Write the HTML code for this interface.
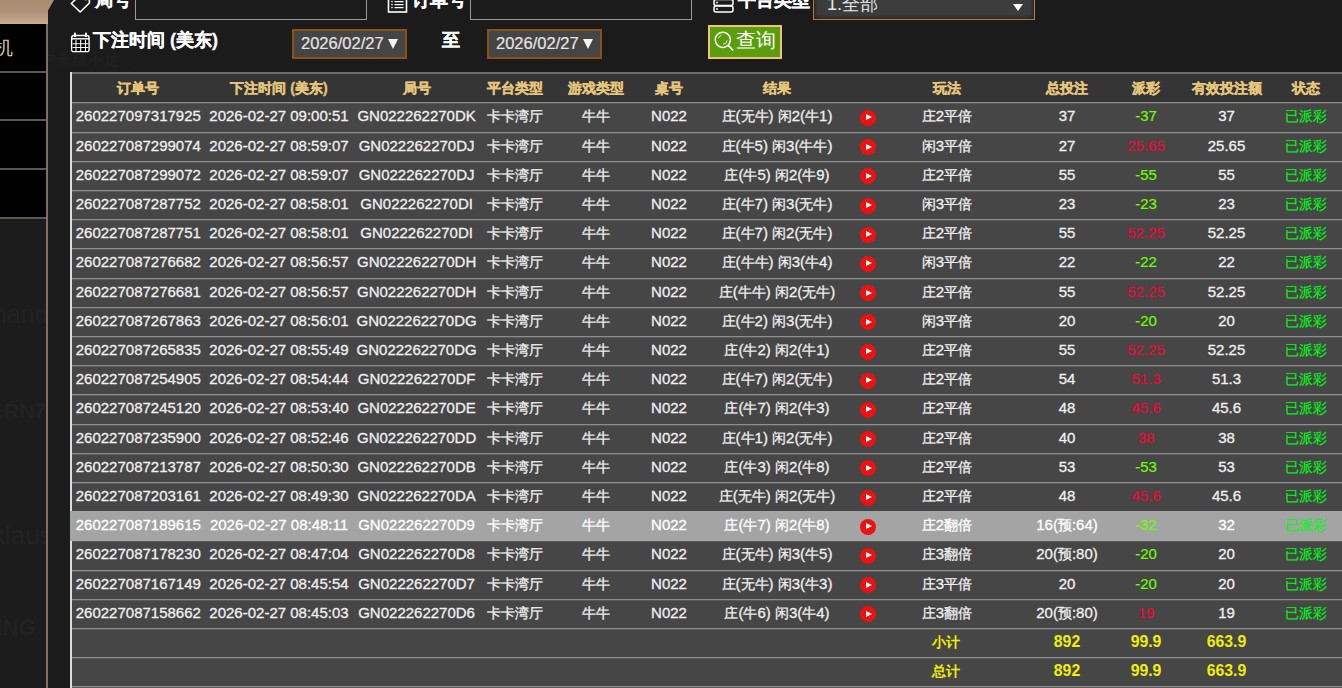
<!DOCTYPE html>
<html><head><meta charset="utf-8">
<style>
*{margin:0;padding:0;box-sizing:border-box}
html,body{width:1342px;height:688px;overflow:hidden;background:#1b1b1b;font-family:"Liberation Sans",sans-serif;color:#fff}
body{position:relative}
.a{position:absolute}
/* sidebar */
#sb{left:0;top:0;width:46px;height:688px;background:#1c1c1c}
#tan{left:0;top:0;width:60px;height:24px;background:linear-gradient(#a98b6e 0%,#b0937a 50%,#c8ad8e 100%)}
.item{left:0;width:46px;background:#000}
.sep{left:0;width:46px;height:2px;background:#5c5751}
#sbb{left:46px;top:24px;width:2px;height:664px;background:#7d6f62}
#main{left:48px;top:0;width:1294px;height:688px;background:#1b1b1b;clip-path:polygon(6px 0,100% 0,100% 100%,0 100%,0 10.5px)}
.lbl{font-size:18px;font-weight:bold;color:#fff;white-space:nowrap;line-height:20px;-webkit-text-stroke:0.3px #fff}
.inp{border:1.5px solid #9a9a9a;background:transparent}
.date{border:2px solid #8b4f1a;background:#454545;color:#e6e6e6;font-size:16.5px;line-height:24px;padding-left:7px;white-space:nowrap;-webkit-text-stroke:0.2px #e6e6e6}
.date i{position:absolute;left:93.5px;top:8px;width:0;height:0;border-left:5.5px solid transparent;border-right:5.5px solid transparent;border-top:10px solid #f4f4f4}
#btn{left:708px;top:25px;width:74px;height:34px;border:2px solid #f2c274;background:#5a9e0e}
/* table */
#tbl{left:70px;top:72px;width:1272px;height:616px;overflow:hidden}
.hrow{position:absolute;left:0;top:0;width:1272px;height:30px;background:#353535;border-top:2px solid #6e6e6e}
.row{position:absolute;left:0;width:1272px;height:29.17px;background:#464646}
.row::before{content:"";position:absolute;left:0;top:0;width:100%;height:1px;background:#8e8e8e;box-shadow:0 1px 0 #5a5a5a}
.row.hl{background:#a4a4a4;z-index:2;height:29.8px}
.row.hl::before{display:none}
.hl .c:not(.pg):not(.st){color:#fff}
.c{position:absolute;top:0;width:200px;text-align:center;white-space:nowrap;font-size:15px;line-height:27px;color:#f0f0f0;-webkit-text-stroke:0.3px currentColor}
.hrow .c{color:#e6c57c;font-weight:bold;font-size:14.2px;line-height:28px}
.z{font-weight:inherit;font-size:14.1px}
.hrow .z{font-size:14.2px}
.pg{color:#70ff00;-webkit-text-stroke:0.15px currentColor}
.pr{color:#ff0034;-webkit-text-stroke:0}
.st{color:#00f814;-webkit-text-stroke:0.15px currentColor}
.sum{color:#f0f000;font-weight:bold;-webkit-text-stroke:0;font-size:15.8px}
.sum .z{font-size:14.2px}
.play{position:absolute;top:7.5px;width:16px;height:16px;border-radius:50%;background:#ee1111}
.play::after{content:"";position:absolute;left:6px;top:4.5px;border-left:6px solid #fff;border-top:3.5px solid transparent;border-bottom:3.5px solid transparent}
#lb{left:70px;top:72px;width:2px;height:616px;background:#dcdcdc}
</style></head><body>
<div id="sb" class="a"></div>
<div id="tan" class="a"></div>
<div class="a item" style="top:24px;height:48px"></div>
<div class="a sep" style="top:71px"></div>
<div class="a item" style="top:73px;height:47px"></div>
<div class="a sep" style="top:119px"></div>
<div class="a item" style="top:121px;height:48px"></div>
<div class="a sep" style="top:168px"></div>
<div class="a item" style="top:170px;height:48px"></div>
<div class="a sep" style="top:217px"></div>
<div class="a" style="left:0;top:218px;width:46px;height:470px;overflow:hidden">
<div class="a" style="left:-14px;top:81px;font-size:25px;line-height:30px;color:#222;white-space:nowrap">manda</div>
<div class="a" style="left:-10px;top:180px;font-size:21px;font-weight:bold;line-height:26px;color:#222;white-space:nowrap">ERN73</div>
<div class="a" style="left:-8px;top:302px;font-size:26px;line-height:30px;color:#222;white-space:nowrap">klaus</div>
<div class="a" style="left:-12px;top:397px;font-size:22px;font-weight:bold;line-height:26px;color:#222;white-space:nowrap">ENG</div>
</div>
<div class="a" style="left:-6px;top:36.5px;font-size:19px;color:#d8c8b0;line-height:21px">机</div>
<div id="sbb" class="a"></div>
<div id="main" class="a"><div class="a" style="left:-8px;top:50px;font-size:16px;line-height:20px;color:#212121;white-space:nowrap">户余额不足，</div></div>

<!-- filter row 1 -->
<svg class="a" style="left:70px;top:-8px" width="22" height="24" viewBox="0 0 22 24"><path d="M9.5 3.5 L1.3 11.5 L10.2 20 L19.4 11 L19.4 1" fill="none" stroke="#fff" stroke-width="1.6" stroke-linejoin="round"/><circle cx="15.8" cy="8.3" r="1" fill="#666"/></svg>
<div class="a lbl" style="left:95px;top:-10px">局号</div>
<div class="a inp" style="left:135px;top:-10px;width:232px;height:30px"></div>
<svg class="a" style="left:387px;top:-8px" width="21" height="21" viewBox="0 0 21 21"><rect x="1.5" y="0" width="18" height="20" fill="none" stroke="#fff" stroke-width="1.6"/><path d="M7.5 9.6h9M7.5 12.6h9M7.5 15.6h9" stroke="#fff" stroke-width="1.2"/><circle cx="5" cy="9.6" r="0.8" fill="#fff"/><circle cx="5" cy="12.6" r="0.8" fill="#fff"/><circle cx="5" cy="15.6" r="0.8" fill="#fff"/></svg>
<div class="a lbl" style="left:412px;top:-10px">订单号</div>
<div class="a inp" style="left:470px;top:-10px;width:222px;height:30px"></div>
<svg class="a" style="left:712px;top:-8px" width="22" height="21" viewBox="0 0 22 21"><rect x="2" y="7.5" width="19" height="6" rx="2" fill="none" stroke="#fff" stroke-width="1.5"/><rect x="2" y="14" width="19" height="6" rx="2" fill="none" stroke="#fff" stroke-width="1.5"/><circle cx="5" cy="10.5" r="0.9" fill="#fff"/><circle cx="5" cy="17" r="0.9" fill="#fff"/></svg>
<div class="a lbl" style="left:738px;top:-10px">平台类型</div>
<div class="a" style="left:813px;top:-12px;width:222px;height:32px;border:1px solid #b87838;background:#3c3c3c;box-shadow:inset 0 0 4px #111"></div>
<div class="a" style="left:827px;top:-6.5px;font-size:18px;line-height:20px;color:#e8e8e8">1.全部</div>
<div class="a" style="left:1013px;top:4px;width:0;height:0;border-left:5.5px solid transparent;border-right:5.5px solid transparent;border-top:7px solid #fff"></div>

<!-- filter row 2 -->
<svg class="a" style="left:70px;top:32px" width="21" height="21" viewBox="0 0 21 21"><rect x="1.7" y="3.5" width="17.3" height="16.1" rx="2.2" fill="none" stroke="#fff" stroke-width="1.5"/><rect x="2.6" y="8" width="15.6" height="11" fill="#000"/><path d="M1.7 6.8h17.3" stroke="#fff" stroke-width="1.4"/><path d="M5 1.6v2.6M16 1.6v2.6" stroke="#fff" stroke-width="2" stroke-linecap="round"/><path d="M6 8v11M10.7 8v11M15.5 8v11M2.5 11.7h15.8M2.5 15.5h15.8" stroke="#fff" stroke-width="1.1"/></svg>
<div class="a lbl" style="left:93px;top:30px">下注时间 (美东)</div>
<div class="a date" style="left:292px;top:29px;width:115px;height:30px">2026/02/27<i></i></div>
<div class="a lbl" style="left:442px;top:30px">至</div>
<div class="a date" style="left:487px;top:29px;width:115px;height:30px">2026/02/27<i></i></div>
<div id="btn" class="a"></div>
<svg class="a" style="left:714px;top:31px" width="21" height="21" viewBox="0 0 21 21"><circle cx="8.8" cy="8.8" r="7.6" fill="none" stroke="#fff" stroke-width="1.5"/><path d="M14.2 14.4L18.6 18.8" stroke="#fff" stroke-width="1.7" stroke-linecap="round"/><path d="M4.6 7.2a4.8 4.8 0 0 1 2.8-3" fill="none" stroke="#fff" stroke-width="0.9" opacity="0.85"/><path d="M13.2 9.2a4.8 4.8 0 0 1 -4.2 4.2" fill="none" stroke="#fff" stroke-width="0.9" opacity="0.85"/></svg>
<div class="a" style="left:736px;top:28px;font-size:20px;line-height:24px;color:#fff">查询</div>

<div id="tbl" class="a">
<div class="hrow"><span class="c " style="left:-31.7px"><b class="z">订单号</b></span><span class="c " style="left:109.0px"><b class="z">下注时间</b> (<b class="z">美东</b>)</span><span class="c " style="left:246.6px"><b class="z">局号</b></span><span class="c " style="left:344.5px"><b class="z">平台类型</b></span><span class="c " style="left:426.0px"><b class="z">游戏类型</b></span><span class="c " style="left:499.0px"><b class="z">桌号</b></span><span class="c " style="left:607.0px"><b class="z">结果</b></span><span class="c " style="left:777.0px"><b class="z">玩法</b></span><span class="c " style="left:897.0px"><b class="z">总投注</b></span><span class="c " style="left:976.0px"><b class="z">派彩</b></span><span class="c " style="left:1056.5px"><b class="z">有效投注额</b></span><span class="c " style="left:1136.0px"><b class="z">状态</b></span></div>
<div class="row" style="top:30.40px"><span class="c " style="left:-31.7px">260227097317925</span><span class="c " style="left:109.0px">2026-02-27 09:00:51</span><span class="c " style="left:246.6px">GN022262270DK</span><span class="c " style="left:344.5px"><b class="z">卡卡湾厅</b></span><span class="c " style="left:426.0px"><b class="z">牛牛</b></span><span class="c " style="left:499.0px">N022</span><span class="c " style="left:607.0px"><b class="z">庄</b>(<b class="z">无牛</b>) <b class="z">闲</b>2(<b class="z">牛</b>1)</span><span class="play" style="left:790.0px"></span><span class="c " style="left:777.0px"><b class="z">庄</b>2<b class="z">平倍</b></span><span class="c " style="left:897.0px">37</span><span class="c pg" style="left:976.0px">-37</span><span class="c " style="left:1056.5px">37</span><span class="c st" style="left:1136.0px"><b class="z">已派彩</b></span></div>
<div class="row" style="top:59.60px"><span class="c " style="left:-31.7px">260227087299074</span><span class="c " style="left:109.0px">2026-02-27 08:59:07</span><span class="c " style="left:246.6px">GN022262270DJ</span><span class="c " style="left:344.5px"><b class="z">卡卡湾厅</b></span><span class="c " style="left:426.0px"><b class="z">牛牛</b></span><span class="c " style="left:499.0px">N022</span><span class="c " style="left:607.0px"><b class="z">庄</b>(<b class="z">牛</b>5) <b class="z">闲</b>3(<b class="z">牛牛</b>)</span><span class="play" style="left:790.0px"></span><span class="c " style="left:777.0px"><b class="z">闲</b>3<b class="z">平倍</b></span><span class="c " style="left:897.0px">27</span><span class="c pr" style="left:976.0px">25.65</span><span class="c " style="left:1056.5px">25.65</span><span class="c st" style="left:1136.0px"><b class="z">已派彩</b></span></div>
<div class="row" style="top:88.80px"><span class="c " style="left:-31.7px">260227087299072</span><span class="c " style="left:109.0px">2026-02-27 08:59:07</span><span class="c " style="left:246.6px">GN022262270DJ</span><span class="c " style="left:344.5px"><b class="z">卡卡湾厅</b></span><span class="c " style="left:426.0px"><b class="z">牛牛</b></span><span class="c " style="left:499.0px">N022</span><span class="c " style="left:607.0px"><b class="z">庄</b>(<b class="z">牛</b>5) <b class="z">闲</b>2(<b class="z">牛</b>9)</span><span class="play" style="left:790.0px"></span><span class="c " style="left:777.0px"><b class="z">庄</b>2<b class="z">平倍</b></span><span class="c " style="left:897.0px">55</span><span class="c pg" style="left:976.0px">-55</span><span class="c " style="left:1056.5px">55</span><span class="c st" style="left:1136.0px"><b class="z">已派彩</b></span></div>
<div class="row" style="top:118.00px"><span class="c " style="left:-31.7px">260227087287752</span><span class="c " style="left:109.0px">2026-02-27 08:58:01</span><span class="c " style="left:246.6px">GN022262270DI</span><span class="c " style="left:344.5px"><b class="z">卡卡湾厅</b></span><span class="c " style="left:426.0px"><b class="z">牛牛</b></span><span class="c " style="left:499.0px">N022</span><span class="c " style="left:607.0px"><b class="z">庄</b>(<b class="z">牛</b>7) <b class="z">闲</b>3(<b class="z">无牛</b>)</span><span class="play" style="left:790.0px"></span><span class="c " style="left:777.0px"><b class="z">闲</b>3<b class="z">平倍</b></span><span class="c " style="left:897.0px">23</span><span class="c pg" style="left:976.0px">-23</span><span class="c " style="left:1056.5px">23</span><span class="c st" style="left:1136.0px"><b class="z">已派彩</b></span></div>
<div class="row" style="top:147.20px"><span class="c " style="left:-31.7px">260227087287751</span><span class="c " style="left:109.0px">2026-02-27 08:58:01</span><span class="c " style="left:246.6px">GN022262270DI</span><span class="c " style="left:344.5px"><b class="z">卡卡湾厅</b></span><span class="c " style="left:426.0px"><b class="z">牛牛</b></span><span class="c " style="left:499.0px">N022</span><span class="c " style="left:607.0px"><b class="z">庄</b>(<b class="z">牛</b>7) <b class="z">闲</b>2(<b class="z">无牛</b>)</span><span class="play" style="left:790.0px"></span><span class="c " style="left:777.0px"><b class="z">庄</b>2<b class="z">平倍</b></span><span class="c " style="left:897.0px">55</span><span class="c pr" style="left:976.0px">52.25</span><span class="c " style="left:1056.5px">52.25</span><span class="c st" style="left:1136.0px"><b class="z">已派彩</b></span></div>
<div class="row" style="top:176.40px"><span class="c " style="left:-31.7px">260227087276682</span><span class="c " style="left:109.0px">2026-02-27 08:56:57</span><span class="c " style="left:246.6px">GN022262270DH</span><span class="c " style="left:344.5px"><b class="z">卡卡湾厅</b></span><span class="c " style="left:426.0px"><b class="z">牛牛</b></span><span class="c " style="left:499.0px">N022</span><span class="c " style="left:607.0px"><b class="z">庄</b>(<b class="z">牛牛</b>) <b class="z">闲</b>3(<b class="z">牛</b>4)</span><span class="play" style="left:790.0px"></span><span class="c " style="left:777.0px"><b class="z">闲</b>3<b class="z">平倍</b></span><span class="c " style="left:897.0px">22</span><span class="c pg" style="left:976.0px">-22</span><span class="c " style="left:1056.5px">22</span><span class="c st" style="left:1136.0px"><b class="z">已派彩</b></span></div>
<div class="row" style="top:205.60px"><span class="c " style="left:-31.7px">260227087276681</span><span class="c " style="left:109.0px">2026-02-27 08:56:57</span><span class="c " style="left:246.6px">GN022262270DH</span><span class="c " style="left:344.5px"><b class="z">卡卡湾厅</b></span><span class="c " style="left:426.0px"><b class="z">牛牛</b></span><span class="c " style="left:499.0px">N022</span><span class="c " style="left:607.0px"><b class="z">庄</b>(<b class="z">牛牛</b>) <b class="z">闲</b>2(<b class="z">无牛</b>)</span><span class="play" style="left:790.0px"></span><span class="c " style="left:777.0px"><b class="z">庄</b>2<b class="z">平倍</b></span><span class="c " style="left:897.0px">55</span><span class="c pr" style="left:976.0px">52.25</span><span class="c " style="left:1056.5px">52.25</span><span class="c st" style="left:1136.0px"><b class="z">已派彩</b></span></div>
<div class="row" style="top:234.80px"><span class="c " style="left:-31.7px">260227087267863</span><span class="c " style="left:109.0px">2026-02-27 08:56:01</span><span class="c " style="left:246.6px">GN022262270DG</span><span class="c " style="left:344.5px"><b class="z">卡卡湾厅</b></span><span class="c " style="left:426.0px"><b class="z">牛牛</b></span><span class="c " style="left:499.0px">N022</span><span class="c " style="left:607.0px"><b class="z">庄</b>(<b class="z">牛</b>2) <b class="z">闲</b>3(<b class="z">无牛</b>)</span><span class="play" style="left:790.0px"></span><span class="c " style="left:777.0px"><b class="z">闲</b>3<b class="z">平倍</b></span><span class="c " style="left:897.0px">20</span><span class="c pg" style="left:976.0px">-20</span><span class="c " style="left:1056.5px">20</span><span class="c st" style="left:1136.0px"><b class="z">已派彩</b></span></div>
<div class="row" style="top:264.00px"><span class="c " style="left:-31.7px">260227087265835</span><span class="c " style="left:109.0px">2026-02-27 08:55:49</span><span class="c " style="left:246.6px">GN022262270DG</span><span class="c " style="left:344.5px"><b class="z">卡卡湾厅</b></span><span class="c " style="left:426.0px"><b class="z">牛牛</b></span><span class="c " style="left:499.0px">N022</span><span class="c " style="left:607.0px"><b class="z">庄</b>(<b class="z">牛</b>2) <b class="z">闲</b>2(<b class="z">牛</b>1)</span><span class="play" style="left:790.0px"></span><span class="c " style="left:777.0px"><b class="z">庄</b>2<b class="z">平倍</b></span><span class="c " style="left:897.0px">55</span><span class="c pr" style="left:976.0px">52.25</span><span class="c " style="left:1056.5px">52.25</span><span class="c st" style="left:1136.0px"><b class="z">已派彩</b></span></div>
<div class="row" style="top:293.20px"><span class="c " style="left:-31.7px">260227087254905</span><span class="c " style="left:109.0px">2026-02-27 08:54:44</span><span class="c " style="left:246.6px">GN022262270DF</span><span class="c " style="left:344.5px"><b class="z">卡卡湾厅</b></span><span class="c " style="left:426.0px"><b class="z">牛牛</b></span><span class="c " style="left:499.0px">N022</span><span class="c " style="left:607.0px"><b class="z">庄</b>(<b class="z">牛</b>7) <b class="z">闲</b>2(<b class="z">无牛</b>)</span><span class="play" style="left:790.0px"></span><span class="c " style="left:777.0px"><b class="z">庄</b>2<b class="z">平倍</b></span><span class="c " style="left:897.0px">54</span><span class="c pr" style="left:976.0px">51.3</span><span class="c " style="left:1056.5px">51.3</span><span class="c st" style="left:1136.0px"><b class="z">已派彩</b></span></div>
<div class="row" style="top:322.40px"><span class="c " style="left:-31.7px">260227087245120</span><span class="c " style="left:109.0px">2026-02-27 08:53:40</span><span class="c " style="left:246.6px">GN022262270DE</span><span class="c " style="left:344.5px"><b class="z">卡卡湾厅</b></span><span class="c " style="left:426.0px"><b class="z">牛牛</b></span><span class="c " style="left:499.0px">N022</span><span class="c " style="left:607.0px"><b class="z">庄</b>(<b class="z">牛</b>7) <b class="z">闲</b>2(<b class="z">牛</b>3)</span><span class="play" style="left:790.0px"></span><span class="c " style="left:777.0px"><b class="z">庄</b>2<b class="z">平倍</b></span><span class="c " style="left:897.0px">48</span><span class="c pr" style="left:976.0px">45.6</span><span class="c " style="left:1056.5px">45.6</span><span class="c st" style="left:1136.0px"><b class="z">已派彩</b></span></div>
<div class="row" style="top:351.60px"><span class="c " style="left:-31.7px">260227087235900</span><span class="c " style="left:109.0px">2026-02-27 08:52:46</span><span class="c " style="left:246.6px">GN022262270DD</span><span class="c " style="left:344.5px"><b class="z">卡卡湾厅</b></span><span class="c " style="left:426.0px"><b class="z">牛牛</b></span><span class="c " style="left:499.0px">N022</span><span class="c " style="left:607.0px"><b class="z">庄</b>(<b class="z">牛</b>1) <b class="z">闲</b>2(<b class="z">无牛</b>)</span><span class="play" style="left:790.0px"></span><span class="c " style="left:777.0px"><b class="z">庄</b>2<b class="z">平倍</b></span><span class="c " style="left:897.0px">40</span><span class="c pr" style="left:976.0px">38</span><span class="c " style="left:1056.5px">38</span><span class="c st" style="left:1136.0px"><b class="z">已派彩</b></span></div>
<div class="row" style="top:380.80px"><span class="c " style="left:-31.7px">260227087213787</span><span class="c " style="left:109.0px">2026-02-27 08:50:30</span><span class="c " style="left:246.6px">GN022262270DB</span><span class="c " style="left:344.5px"><b class="z">卡卡湾厅</b></span><span class="c " style="left:426.0px"><b class="z">牛牛</b></span><span class="c " style="left:499.0px">N022</span><span class="c " style="left:607.0px"><b class="z">庄</b>(<b class="z">牛</b>3) <b class="z">闲</b>2(<b class="z">牛</b>8)</span><span class="play" style="left:790.0px"></span><span class="c " style="left:777.0px"><b class="z">庄</b>2<b class="z">平倍</b></span><span class="c " style="left:897.0px">53</span><span class="c pg" style="left:976.0px">-53</span><span class="c " style="left:1056.5px">53</span><span class="c st" style="left:1136.0px"><b class="z">已派彩</b></span></div>
<div class="row" style="top:410.00px"><span class="c " style="left:-31.7px">260227087203161</span><span class="c " style="left:109.0px">2026-02-27 08:49:30</span><span class="c " style="left:246.6px">GN022262270DA</span><span class="c " style="left:344.5px"><b class="z">卡卡湾厅</b></span><span class="c " style="left:426.0px"><b class="z">牛牛</b></span><span class="c " style="left:499.0px">N022</span><span class="c " style="left:607.0px"><b class="z">庄</b>(<b class="z">无牛</b>) <b class="z">闲</b>2(<b class="z">无牛</b>)</span><span class="play" style="left:790.0px"></span><span class="c " style="left:777.0px"><b class="z">庄</b>2<b class="z">平倍</b></span><span class="c " style="left:897.0px">48</span><span class="c pr" style="left:976.0px">45.6</span><span class="c " style="left:1056.5px">45.6</span><span class="c st" style="left:1136.0px"><b class="z">已派彩</b></span></div>
<div class="row hl" style="top:439.20px"><span class="c " style="left:-31.7px">260227087189615</span><span class="c " style="left:109.0px">2026-02-27 08:48:11</span><span class="c " style="left:246.6px">GN022262270D9</span><span class="c " style="left:344.5px"><b class="z">卡卡湾厅</b></span><span class="c " style="left:426.0px"><b class="z">牛牛</b></span><span class="c " style="left:499.0px">N022</span><span class="c " style="left:607.0px"><b class="z">庄</b>(<b class="z">牛</b>7) <b class="z">闲</b>2(<b class="z">牛</b>8)</span><span class="play" style="left:790.0px"></span><span class="c " style="left:777.0px"><b class="z">庄</b>2<b class="z">翻倍</b></span><span class="c " style="left:897.0px">16(<b class="z">预</b>:64)</span><span class="c pg" style="left:976.0px">-32</span><span class="c " style="left:1056.5px">32</span><span class="c st" style="left:1136.0px"><b class="z">已派彩</b></span></div>
<div class="row" style="top:468.40px"><span class="c " style="left:-31.7px">260227087178230</span><span class="c " style="left:109.0px">2026-02-27 08:47:04</span><span class="c " style="left:246.6px">GN022262270D8</span><span class="c " style="left:344.5px"><b class="z">卡卡湾厅</b></span><span class="c " style="left:426.0px"><b class="z">牛牛</b></span><span class="c " style="left:499.0px">N022</span><span class="c " style="left:607.0px"><b class="z">庄</b>(<b class="z">无牛</b>) <b class="z">闲</b>3(<b class="z">牛</b>5)</span><span class="play" style="left:790.0px"></span><span class="c " style="left:777.0px"><b class="z">庄</b>3<b class="z">翻倍</b></span><span class="c " style="left:897.0px">20(<b class="z">预</b>:80)</span><span class="c pg" style="left:976.0px">-20</span><span class="c " style="left:1056.5px">20</span><span class="c st" style="left:1136.0px"><b class="z">已派彩</b></span></div>
<div class="row" style="top:497.60px"><span class="c " style="left:-31.7px">260227087167149</span><span class="c " style="left:109.0px">2026-02-27 08:45:54</span><span class="c " style="left:246.6px">GN022262270D7</span><span class="c " style="left:344.5px"><b class="z">卡卡湾厅</b></span><span class="c " style="left:426.0px"><b class="z">牛牛</b></span><span class="c " style="left:499.0px">N022</span><span class="c " style="left:607.0px"><b class="z">庄</b>(<b class="z">无牛</b>) <b class="z">闲</b>3(<b class="z">牛</b>3)</span><span class="play" style="left:790.0px"></span><span class="c " style="left:777.0px"><b class="z">庄</b>3<b class="z">平倍</b></span><span class="c " style="left:897.0px">20</span><span class="c pg" style="left:976.0px">-20</span><span class="c " style="left:1056.5px">20</span><span class="c st" style="left:1136.0px"><b class="z">已派彩</b></span></div>
<div class="row" style="top:526.80px"><span class="c " style="left:-31.7px">260227087158662</span><span class="c " style="left:109.0px">2026-02-27 08:45:03</span><span class="c " style="left:246.6px">GN022262270D6</span><span class="c " style="left:344.5px"><b class="z">卡卡湾厅</b></span><span class="c " style="left:426.0px"><b class="z">牛牛</b></span><span class="c " style="left:499.0px">N022</span><span class="c " style="left:607.0px"><b class="z">庄</b>(<b class="z">牛</b>6) <b class="z">闲</b>3(<b class="z">牛</b>4)</span><span class="play" style="left:790.0px"></span><span class="c " style="left:777.0px"><b class="z">庄</b>3<b class="z">翻倍</b></span><span class="c " style="left:897.0px">20(<b class="z">预</b>:80)</span><span class="c pr" style="left:976.0px">19</span><span class="c " style="left:1056.5px">19</span><span class="c st" style="left:1136.0px"><b class="z">已派彩</b></span></div>
<div class="row" style="top:614.40px"></div>
<div class="row" style="top:556.00px"><span class="c sum" style="left:775.5px"><b class="z">小计</b></span><span class="c sum" style="left:897.0px">892</span><span class="c sum" style="left:976.0px">99.9</span><span class="c sum" style="left:1056.5px">663.9</span></div>
<div class="row" style="top:585.20px"><span class="c sum" style="left:775.5px"><b class="z">总计</b></span><span class="c sum" style="left:897.0px">892</span><span class="c sum" style="left:976.0px">99.9</span><span class="c sum" style="left:1056.5px">663.9</span></div>
</div>
<div id="lb" class="a"></div>
</body></html>
